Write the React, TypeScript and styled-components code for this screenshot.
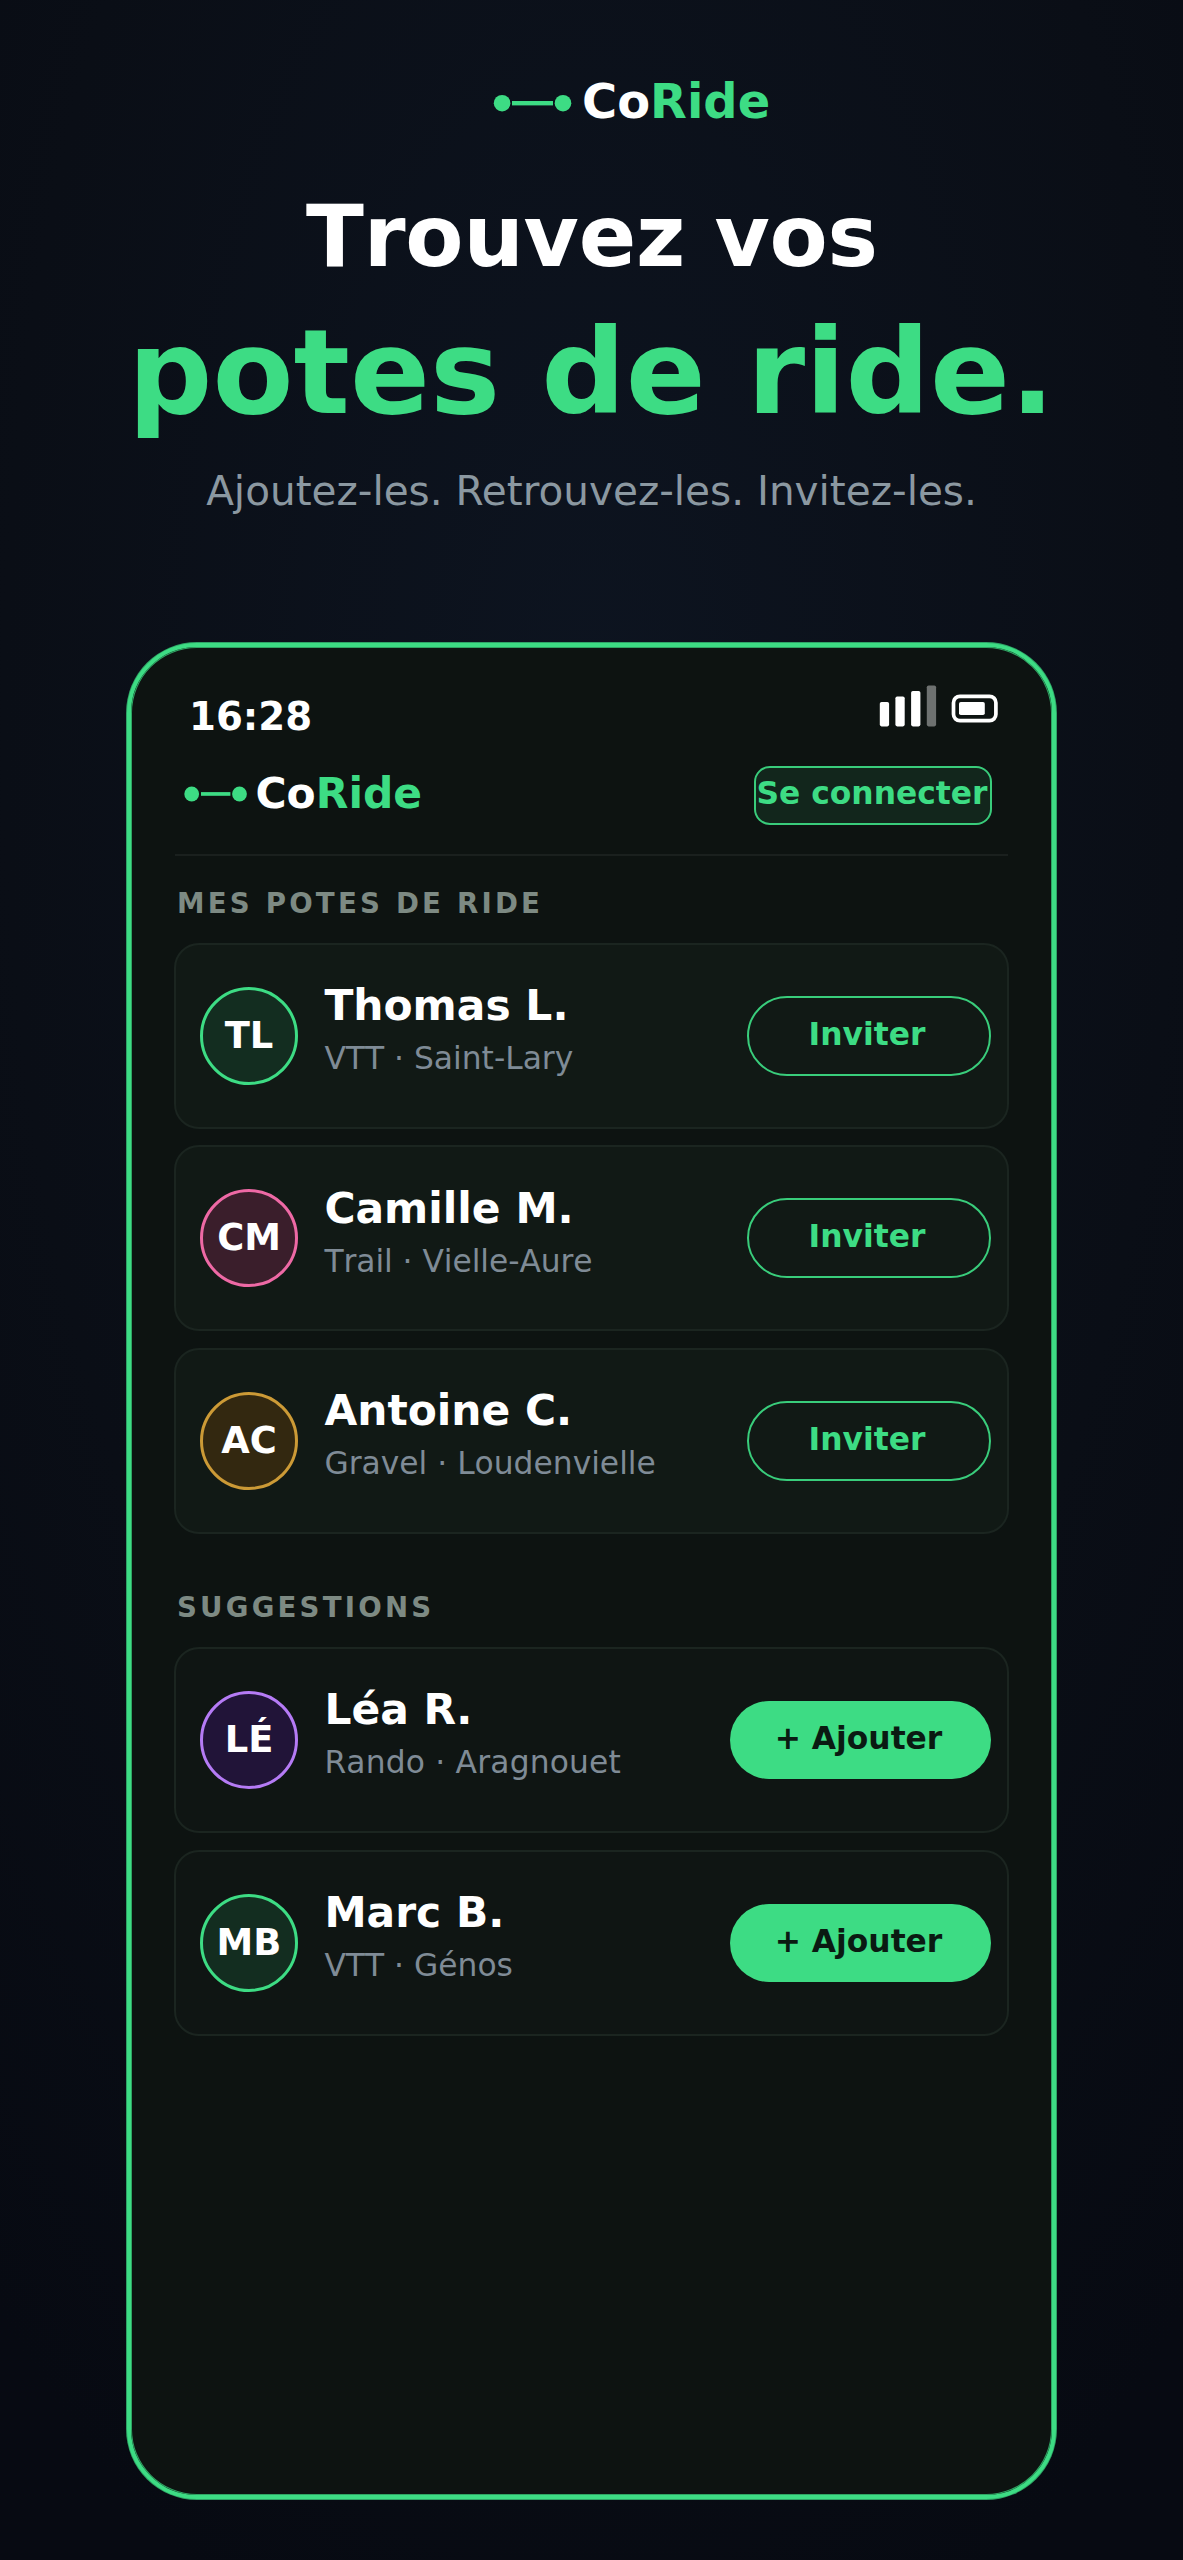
import React from "react";
import styled, { createGlobalStyle } from "styled-components";

const GREEN = "#3ddc84";

const GlobalStyle = createGlobalStyle`
  * { box-sizing: border-box; }
  body {
    margin: 0;
    background: #070a12;
    font-family: "DejaVu Sans", sans-serif;
    font-kerning: none;
    color: #ffffff;
  }
`;

const Page = styled.main`
  display: flex;
  flex-direction: column;
  align-items: center;
  width: 1183px;
  height: 2560px;
  padding-top: 71px;
  overflow: hidden;
  background: radial-gradient(ellipse 80% 80% at 50% 28%, #0d1420 0%, #0a0e16 62%, #070a12 100%);
`;

const Brand = styled.div<{ $size: number; $height: number }>`
  display: flex;
  align-items: flex-start;
  height: ${(p) => p.$height}px;
  font-size: ${(p) => p.$size}px;
  line-height: ${(p) => p.$height}px;
  font-weight: 700;
  white-space: nowrap;
`;

const HeroBrand = styled.div`
  align-self: flex-start;
  padding-left: 492px;
`;

const BrandAccent = styled.span`
  color: ${GREEN};
`;

const Title = styled.h1`
  margin: 55px 0 0;
  padding-left: 1px;
  font-size: 84.8px;
  line-height: 98px;
  font-weight: 700;
  letter-spacing: -0.2px;
  white-space: nowrap;
`;

const TitleAccent = styled.p`
  margin: 18px 0 0;
  font-size: 118px;
  line-height: 136px;
  font-weight: 700;
  color: ${GREEN};
  white-space: nowrap;
`;

const Tagline = styled.p`
  margin: 27px 0 0;
  font-size: 40.55px;
  line-height: 48px;
  font-kerning: normal;
  color: #8b98a1;
  white-space: nowrap;
`;

const Phone = styled.section`
  width: 929px;
  height: 1856px;
  margin-top: 128px;
  padding: 38px 43px 0;
  border: 4px solid ${GREEN};
  border-radius: 70px;
  background: #0d1311;
  box-shadow: 0 0 0 1px rgba(61, 220, 132, 0.72), inset 0 0 0 1px rgba(61, 220, 132, 0.72);
`;

const StatusBar = styled.div`
  display: flex;
  justify-content: space-between;
  align-items: flex-start;
  height: 55px;
  padding: 0 9px 0 15px;
`;

const Clock = styled.span`
  margin-top: 9px;
  font-size: 38.7px;
  line-height: 46px;
  font-weight: 700;
`;

const AppHeader = styled.header`
  display: flex;
  justify-content: space-between;
  align-items: flex-start;
  height: 116px;
  margin: 0 1px;
  padding: 26px 16px 0 7px;
  border-bottom: 2px solid #1a201e;
`;

const LoginButton = styled.button`
  display: flex;
  align-items: center;
  justify-content: center;
  width: 238px;
  height: 59px;
  padding: 0 2px 6px 0;
  border: 2px solid rgba(61, 220, 132, 0.92);
  border-radius: 16px;
  background: #12261c;
  background-clip: padding-box;
  color: ${GREEN};
  font: 700 31.33px/36px "DejaVu Sans", sans-serif;
  font-kerning: none;
  white-space: nowrap;
`;

const SectionLabel = styled.h2<{ $top: number }>`
  margin: ${(p) => p.$top}px 0 22.7px;
  padding-left: 3px;
  font-size: 27.65px;
  line-height: 32px;
  font-weight: 700;
  letter-spacing: 3.2px;
  color: #7d8a83;
`;

const CardList = styled.div`
  display: flex;
  flex-direction: column;
  gap: 16.6px;
`;

const Card = styled.article<{ $muted: boolean }>`
  display: flex;
  align-items: center;
  height: 186.1px;
  padding: 0 16px 0 24px;
  border: 2px solid #1b2520;
  border-radius: 25px;
  background: ${(p) => (p.$muted ? "#0f1513" : "#111915")};
`;

const Avatar = styled.div<{ $ring: string; $fill: string }>`
  display: flex;
  align-items: center;
  justify-content: center;
  width: 98px;
  height: 98px;
  flex: none;
  border: 3px solid ${(p) => p.$ring};
  border-radius: 50%;
  background: ${(p) => p.$fill};
  font-size: 36.86px;
  line-height: 44px;
  font-weight: 700;
`;

const Person = styled.div`
  flex: 1;
  align-self: flex-start;
  padding: 36.4px 0 0 26.4px;
  white-space: nowrap;
`;

const Name = styled.div`
  font-size: 42.4px;
  line-height: 50px;
  font-weight: 700;
`;

const Detail = styled.div<{ $tracking?: number }>`
  margin-top: 7px;
  font-size: 31.33px;
  line-height: 40px;
  letter-spacing: ${(p) => p.$tracking ?? 0}px;
  color: #7f8b96;
`;

const ActionButton = styled.button<{ $filled: boolean }>`
  display: flex;
  align-items: center;
  justify-content: center;
  flex: none;
  width: ${(p) => (p.$filled ? 261 : 244)}px;
  height: ${(p) => (p.$filled ? 78 : 80)}px;
  padding: 0 4px 4px 0;
  border: ${(p) => (p.$filled ? "0" : "2px solid rgba(61, 220, 132, 0.92)")};
  border-radius: 40px;
  background: ${(p) => (p.$filled ? GREEN : "transparent")};
  color: ${(p) => (p.$filled ? "#0a1a12" : GREEN)};
  font: 700 31.33px/36px "DejaVu Sans", sans-serif;
  font-kerning: none;
`;

interface Friend {
  initials: string;
  name: string;
  detail: string;
  ring: string;
  fill: string;
  tracking?: number;
}

const friends: Friend[] = [
  { initials: "TL", name: "Thomas L.", detail: "VTT · Saint-Lary", ring: GREEN, fill: "#132d20" },
  { initials: "CM", name: "Camille M.", detail: "Trail · Vielle-Aure", ring: "#ee69a5", fill: "#3a1e2b", tracking: -0.06 },
  { initials: "AC", name: "Antoine C.", detail: "Gravel · Loudenvielle", ring: "#cc9a36", fill: "#332810" },
];

const suggestions: Friend[] = [
  { initials: "LÉ", name: "Léa R.", detail: "Rando · Aragnouet", ring: "#b57bf5", fill: "#211438", tracking: 0.18 },
  { initials: "MB", name: "Marc B.", detail: "VTT · Génos", ring: GREEN, fill: "#132d20" },
];

function HeroMark() {
  return (
    <svg width="90" height="60" viewBox="0 0 90 60" fill={GREEN}>
      <circle cx="10.1" cy="32.2" r="8.3" />
      <rect x="20" y="30" width="41" height="4.4" />
      <circle cx="71" cy="32.2" r="8.3" />
    </svg>
  );
}

function HeaderMark() {
  return (
    <svg width="73.5" height="54" viewBox="0 0 73.5 54" fill={GREEN}>
      <circle cx="9.7" cy="28" r="7.4" />
      <rect x="19" y="26.1" width="29.4" height="3.7" />
      <circle cx="57.5" cy="28" r="7.4" />
    </svg>
  );
}

function StatusIcons() {
  return (
    <svg width="122" height="44" viewBox="878 685 122 44" fill="#fff">
      <rect x="879.8" y="702" width="9.3" height="24.4" rx="1.8" />
      <rect x="895.4" y="696.5" width="9.3" height="29.9" rx="1.8" />
      <rect x="911.1" y="691" width="9.3" height="35.4" rx="1.8" />
      <rect x="926.8" y="685.4" width="9.3" height="41" rx="1.8" opacity="0.4" />
      <rect x="953.5" y="696.3" width="42.4" height="24.4" rx="6.4" fill="none" stroke="#fff" strokeWidth="3.7" />
      <rect x="959" y="702" width="25.8" height="13" rx="1.8" />
    </svg>
  );
}

function FriendCard({ friend, suggested }: { friend: Friend; suggested: boolean }) {
  return (
    <Card $muted={suggested}>
      <Avatar $ring={friend.ring} $fill={friend.fill}>
        {friend.initials}
      </Avatar>
      <Person>
        <Name>{friend.name}</Name>
        <Detail $tracking={friend.tracking}>{friend.detail}</Detail>
      </Person>
      <ActionButton $filled={suggested}>{suggested ? "+ Ajouter" : "Inviter"}</ActionButton>
    </Card>
  );
}

export default function App() {
  return (
    <>
      <GlobalStyle />
      <Page>
        <HeroBrand>
          <Brand $size={47.9} $height={62}>
            <HeroMark />
            <span>Co</span>
            <BrandAccent>Ride</BrandAccent>
          </Brand>
        </HeroBrand>
        <Title>Trouvez vos</Title>
        <TitleAccent>potes de ride.</TitleAccent>
        <Tagline>Ajoutez-les. Retrouvez-les. Invitez-les.</Tagline>
        <Phone>
          <StatusBar>
            <Clock>16:28</Clock>
            <StatusIcons />
          </StatusBar>
          <AppHeader>
            <Brand $size={42.4} $height={56}>
              <HeaderMark />
              <span>Co</span>
              <BrandAccent>Ride</BrandAccent>
            </Brand>
            <LoginButton>Se connecter</LoginButton>
          </AppHeader>
          <SectionLabel $top={32}>MES POTES DE RIDE</SectionLabel>
          <CardList>
            {friends.map((f) => (
              <FriendCard key={f.initials} friend={f} suggested={false} />
            ))}
          </CardList>
          <SectionLabel $top={58}>SUGGESTIONS</SectionLabel>
          <CardList>
            {suggestions.map((f) => (
              <FriendCard key={f.initials} friend={f} suggested />
            ))}
          </CardList>
        </Phone>
      </Page>
    </>
  );
}
